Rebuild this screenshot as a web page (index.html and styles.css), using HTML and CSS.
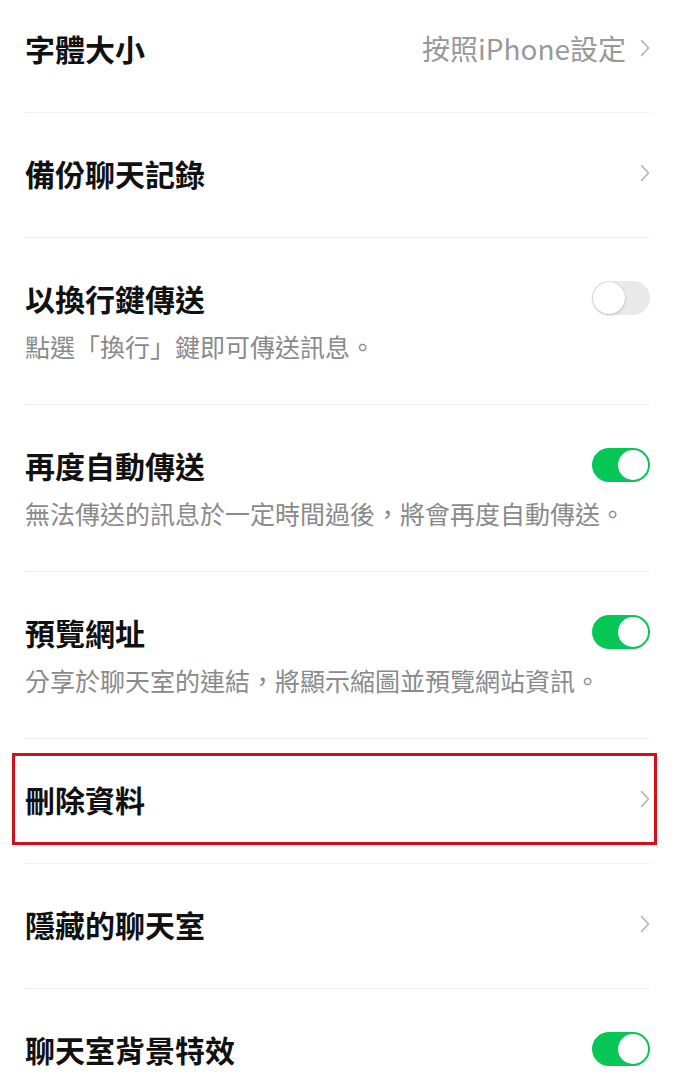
FILE: index.html
```html
<!DOCTYPE html>
<html lang="zh-Hant">
<head>
<meta charset="utf-8">
<title>設定</title>
<link rel="stylesheet" href="styles.css">
</head>
<body>
<div class="list">
  <div class="row">
    <div class="row-inner">
      <span class="title">字體大小</span>
      <span class="value">按照iPhone設定</span>
      <svg class="chev" viewBox="0 0 10 18" width="10" height="18"><polyline points="1.5,1.5 8.5,9 1.5,16.5"/></svg>
    </div>
  </div>
  <div class="row">
    <div class="row-inner">
      <span class="title">備份聊天記錄</span>
      <svg class="chev" viewBox="0 0 10 18" width="10" height="18"><polyline points="1.5,1.5 8.5,9 1.5,16.5"/></svg>
    </div>
  </div>
  <div class="row">
    <div class="row-inner double">
      <div class="head">
        <span class="title">以換行鍵傳送</span>
        <span class="toggle"><span class="knob"></span></span>
      </div>
      <div class="sub">點選「換行」鍵即可傳送訊息。</div>
    </div>
  </div>
  <div class="row">
    <div class="row-inner double">
      <div class="head">
        <span class="title">再度自動傳送</span>
        <span class="toggle on"><span class="knob"></span></span>
      </div>
      <div class="sub">無法傳送的訊息於一定時間過後，將會再度自動傳送。</div>
    </div>
  </div>
  <div class="row">
    <div class="row-inner double">
      <div class="head">
        <span class="title">預覽網址</span>
        <span class="toggle on"><span class="knob"></span></span>
      </div>
      <div class="sub">分享於聊天室的連結，將顯示縮圖並預覽網站資訊。</div>
    </div>
  </div>
  <div class="row highlighted">
    <div class="row-inner">
      <span class="title">刪除資料</span>
      <svg class="chev" viewBox="0 0 10 18" width="10" height="18"><polyline points="1.5,1.5 8.5,9 1.5,16.5"/></svg>
    </div>
    <div class="mark"></div>
  </div>
  <div class="row">
    <div class="row-inner">
      <span class="title">隱藏的聊天室</span>
      <svg class="chev" viewBox="0 0 10 18" width="10" height="18"><polyline points="1.5,1.5 8.5,9 1.5,16.5"/></svg>
    </div>
  </div>
  <div class="row">
    <div class="row-inner">
      <span class="title">聊天室背景特效</span>
      <span class="toggle on"><span class="knob"></span></span>
    </div>
  </div>
</div>
</body>
</html>
```
FILE: styles.css
```css
* { box-sizing: border-box; }
html, body {
  margin: 0;
  padding: 0;
  background: #ffffff;
  overflow: hidden;
}
body {
  font-family: "Noto Sans CJK TC", "Noto Sans", sans-serif;
  color: #111111;
}
.list {
  margin-top: -12px;
}
.row {
  position: relative;
  padding: 0 25px;
}
.row-inner {
  height: 125px;
  padding-bottom: 4px;
  border-bottom: 1.5px solid #f0f0f0;
  display: flex;
  align-items: center;
}
.row-inner.double {
  height: 167px;
  padding-bottom: 0;
  flex-direction: column;
  align-items: stretch;
  justify-content: flex-start;
  padding-top: 40px;
}
.head {
  display: flex;
  align-items: center;
  height: 40px;
}
.title {
  font-size: 30px;
  font-weight: 700;
  line-height: 40px;
  flex: 1;
}
.value {
  font-size: 28px;
  color: #999999;
  line-height: 40px;
  margin-right: 14px;
}
.chev {
  flex: none;
}
.chev polyline {
  fill: none;
  stroke: #b3b3b3;
  stroke-width: 1.6;
  stroke-linecap: round;
  stroke-linejoin: round;
}
.sub {
  margin-top: 10px;
  font-size: 25px;
  line-height: 36px;
  color: #8a8a8a;
  white-space: nowrap;
}
.toggle {
  flex: none;
  width: 58px;
  height: 34px;
  border-radius: 17px;
  background: #e9e9ea;
  position: relative;
}
.toggle .knob {
  position: absolute;
  top: 1px;
  left: 1px;
  width: 32px;
  height: 32px;
  border-radius: 50%;
  background: #ffffff;
  box-shadow: 0 1px 3px rgba(0,0,0,0.18), 0 0 0 0.5px rgba(0,0,0,0.06);
}
.toggle.on {
  background: #06c755;
}
.toggle.on .knob {
  left: auto;
  right: 2px;
  top: 2px;
  width: 30px;
  height: 30px;
  box-shadow: none;
}
.mark {
  position: absolute;
  left: 12px;
  right: 18px;
  top: 14px;
  bottom: 19px;
  border: 3px solid #d3101a;
  pointer-events: none;
}
```
